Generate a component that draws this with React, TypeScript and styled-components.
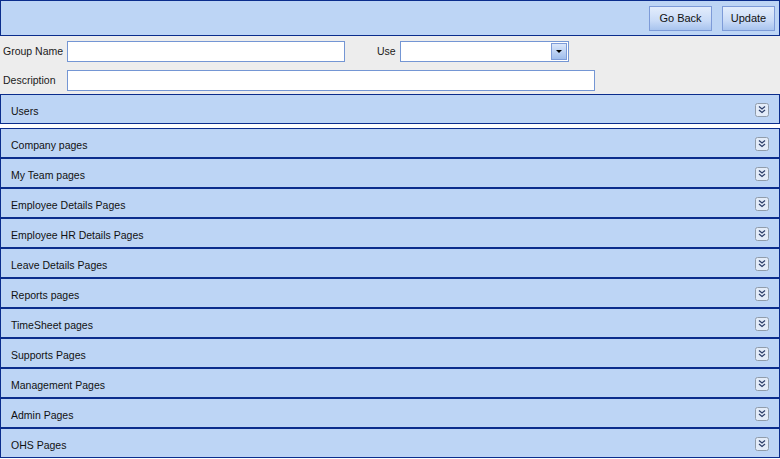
import React from "react";
import styled, { createGlobalStyle } from "styled-components";

const Global = createGlobalStyle`
  html, body { margin: 0; padding: 0; background: #ffffff; }
  body { font-family: "Liberation Sans", Arial, sans-serif; font-size: 10.5px; color: #1a1a1a; }
  * { box-sizing: border-box; }
`;

const Page = styled.div`
  width: 780px;
  display: flex;
  flex-direction: column;
`;

const TopBar = styled.div`
  height: 36px;
  background: #bdd5f5;
  border: 1px solid #0b2d8c;
  display: flex;
  justify-content: flex-end;
  align-items: center;
  gap: 10px;
  padding-right: 4px;
`;

const Button = styled.button<{ $w: number }>`
  width: ${(p) => p.$w}px;
  height: 25px;
  font-family: "Liberation Sans", Arial, sans-serif;
  font-size: 11px;
  color: #111;
  border: 1px solid #7d9bd8;
  background: linear-gradient(#e3edfc, #c9dbf7 60%, #a8c4ee);
  padding: 0;
  cursor: pointer;
`;

const Form = styled.div`
  background: #ededed;
  height: 58px;
  padding: 5px 0 0 3px;
  display: flex;
  flex-direction: column;
  gap: 9px;
`;

const Row = styled.div`
  display: flex;
  align-items: center;
  height: 20px;
`;

const Label = styled.span<{ $w: number; $indent?: number }>`
  width: ${(p) => p.$w}px;
  padding-left: ${(p) => p.$indent ?? 0}px;
  font-size: 10.5px;
  color: #1a1a1a;
`;

const Input = styled.div<{ $w: number }>`
  width: ${(p) => p.$w}px;
  height: 21px;
  background: #fff;
  border: 1px solid #7496d4;
`;

const Select = styled.div`
  width: 169px;
  height: 21px;
  background: #fff;
  border: 1px solid #7496d4;
  display: flex;
  justify-content: flex-end;
  align-items: center;
  padding-right: 1px;
`;

const SelectBtn = styled.div`
  width: 16px;
  height: 17px;
  border: 1px solid #7d9bd8;
  background: linear-gradient(#dbe7fb, #9fbdec);
  display: flex;
  align-items: center;
  justify-content: center;
  &::after {
    content: "";
    border-left: 3px solid transparent;
    border-right: 3px solid transparent;
    border-top: 3px solid #000;
  }
`;

const Panel = styled.div`
  height: 30px;
  background: #bdd5f5;
  border: 1px solid #0b2d8c;
  display: flex;
  align-items: center;
  justify-content: space-between;
  padding: 3px 10px 0 10px;
  font-size: 10.5px;
  color: #111;
`;

const Gap = styled.div`
  height: 4px;
  background: #fff;
`;

const Icon = styled.svg`
  display: block;
  margin-top: -1px;
`;

const Expand = () => (
  <Icon width="14" height="14" viewBox="0 0 14 14">
    <rect x="0.5" y="0.5" width="13" height="13" rx="2" fill="#e3ecf9" stroke="#909caa" />
    <path d="M4 3.5 L7 6 L10 3.5" fill="none" stroke="#2d3f6a" strokeWidth="1.3" />
    <path d="M4 7 L7 9.5 L10 7" fill="none" stroke="#2d3f6a" strokeWidth="1.3" />
  </Icon>
);

const sections = [
  "Company pages",
  "My Team pages",
  "Employee Details Pages",
  "Employee HR Details Pages",
  "Leave Details Pages",
  "Reports pages",
  "TimeSheet pages",
  "Supports Pages",
  "Management Pages",
  "Admin Pages",
  "OHS Pages",
];

export default function App() {
  return (
    <Page>
      <Global />
      <TopBar>
        <Button $w={63}>Go Back</Button>
        <Button $w={53}>Update</Button>
      </TopBar>
      <Form>
        <Row>
          <Label $w={64}>Group Name</Label>
          <Input $w={278} />
          <Label $w={55} $indent={32}>Use</Label>
          <Select>
            <SelectBtn />
          </Select>
        </Row>
        <Row>
          <Label $w={64}>Description</Label>
          <Input $w={528} />
        </Row>
      </Form>
      <Panel>
        <span>Users</span>
        <Expand />
      </Panel>
      <Gap />
      {sections.map((s) => (
        <Panel key={s}>
          <span>{s}</span>
          <Expand />
        </Panel>
      ))}
    </Page>
  );
}
